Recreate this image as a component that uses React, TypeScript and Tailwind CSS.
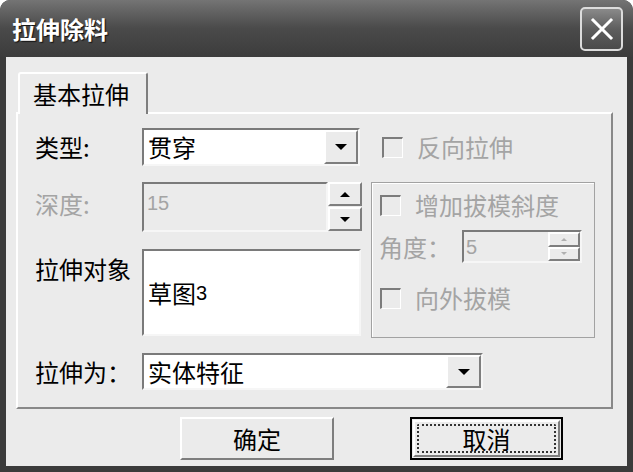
import React from "react";

const F = "font-['Noto_Sans_CJK_SC','Noto_Sans_CJK_JP',sans-serif]";

function Down({ color = "border-t-black", size = "big" }: { color?: string; size?: string }) {
  if (size === "big")
    return <div className={`w-0 h-0 border-l-[6px] border-r-[6px] border-t-[6px] border-l-transparent border-r-transparent ${color}`} />;
  if (size === "mid")
    return <div className={`w-0 h-0 border-l-[5px] border-r-[5px] border-t-[5px] border-l-transparent border-r-transparent ${color}`} />;
  return <div className={`w-0 h-0 border-l-[3px] border-r-[3px] border-t-[3px] border-l-transparent border-r-transparent ${color}`} />;
}
function Up({ color = "border-b-black", size = "big" }: { color?: string; size?: string }) {
  if (size === "big")
    return <div className={`w-0 h-0 border-l-[6px] border-r-[6px] border-b-[6px] border-l-transparent border-r-transparent ${color}`} />;
  if (size === "mid")
    return <div className={`w-0 h-0 border-l-[5px] border-r-[5px] border-b-[5px] border-l-transparent border-r-transparent ${color}`} />;
  return <div className={`w-0 h-0 border-l-[3px] border-r-[3px] border-b-[3px] border-l-transparent border-r-transparent ${color}`} />;
}

const sunken =
  "border-2 border-t-[#7a7a7a] border-l-[#7a7a7a] border-b-[#f6f6f6] border-r-[#f6f6f6]";
const raised =
  "border-2 border-t-white border-l-white border-b-[#7e7e7e] border-r-[#7e7e7e] bg-[#ebebeb]";

function CheckBox({ label }: { label: string }) {
  return (
    <div className="flex items-center">
      <div className="w-[21px] h-[21px] border-t-2 border-l-2 border-[#7c7c7c] border-b border-r border-b-white border-r-white bg-[#ebebeb]" />
      <span className="ml-[14px] text-[24px] leading-none text-[#a4a4a4]">{label}</span>
    </div>
  );
}

export default function App() {
  return (
    <div className={`w-[633px] h-[472px] bg-[#3b3b3b] rounded-t-[10px] flex flex-col overflow-hidden ${F}`}>
      {/* title bar */}
      <div className="h-[57px] flex items-center justify-between pl-[12px] pr-[10px] bg-gradient-to-b from-[#747474] via-[#4a4a4a] to-[#3c3c3c]">
        <span className="text-[24px] font-bold text-white leading-none [text-shadow:1px_1px_1px_#111]">拉伸除料</span>
        <div className="w-[43px] h-[44px] rounded-[5px] border-2 border-[#dcdcdc] bg-gradient-to-b from-[#8a8a8a] via-[#5e5e5e] to-[#4a4a4a] flex items-center justify-center">
          <svg width="26" height="26" viewBox="0 0 26 26">
            <path d="M4 4 L22 22 M22 4 L4 22" stroke="white" strokeWidth="3" strokeLinecap="square" />
          </svg>
        </div>
      </div>

      {/* client */}
      <div className="flex-1 mx-[6px] mb-[6px] bg-[#ebebeb] flex flex-col">
        {/* tab */}
        <div className="ml-[12px] mt-[15px] w-[130px] h-[42px] -mb-[2px] relative z-10 bg-[#ebebeb] border-t-2 border-l-2 border-white border-r-2 border-r-[#7e7e7e] rounded-t-[3px] flex items-center pl-[13px]">
          <span className="text-[24px] leading-none text-black">基本拉伸</span>
        </div>

        {/* panel */}
        <div className="ml-[10px] w-[597px] h-[297px] border-2 border-t-white border-l-white border-b-[#888] border-r-[#888] flex flex-col pl-[17px]">
          {/* row 1 */}
          <div className="mt-[14px] h-[38px] flex items-center">
            <span className="w-[107px] text-[24px] leading-none text-black">类型:</span>
            <div className={`w-[218px] h-[38px] bg-white ${sunken} flex items-center`}>
              <span className="flex-1 pl-[4px] text-[24px] leading-none text-black">贯穿</span>
              <div className={`w-[34px] h-[34px] ${raised} flex items-center justify-center`}>
                <Down />
              </div>
            </div>
            <div className="ml-[22px]">
              <CheckBox label="反向拉伸" />
            </div>
          </div>

          {/* block 2 */}
          <div className="mt-[16px] flex">
            <div className="flex flex-col">
              <div className="flex h-[50px]">
                <span className="w-[107px] mt-[10px] text-[24px] leading-none text-[#a4a4a4]">深度:</span>
                <div className={`w-[186px] h-[50px] ${sunken} bg-[#ebebeb] pl-[3px] pt-[7px]`}>
                  <span className="text-[20px] leading-none text-[#a4a4a4] font-['Liberation_Sans',sans-serif]">15</span>
                </div>
                <div className="w-[34px] flex flex-col gap-[1px]">
                  <div className={`h-[24px] ${raised} flex items-center justify-center`}>
                    <Up size="mid" />
                  </div>
                  <div className={`h-[24px] ${raised} flex items-center justify-center`}>
                    <Down size="mid" />
                  </div>
                </div>
              </div>
              <div className="flex h-[87px] mt-[17px]">
                <span className="w-[107px] mt-[8px] text-[24px] leading-none text-black">拉伸对象</span>
                <div className={`w-[219px] h-[87px] bg-white ${sunken} flex items-center pl-[4px]`}>
                  <span className="text-[24px] leading-none text-black">草图</span>
                  <span className="text-[20px] leading-none text-black font-['Liberation_Sans',sans-serif]">3</span>
                </div>
              </div>
            </div>

            {/* group box */}
            <div className="ml-[9px] w-[224px] h-[156px] border border-[#a2a2a2] shadow-[inset_1px_1px_0_#fff] flex flex-col pl-[8px]">
              <div className="mt-[10px]">
                <CheckBox label="增加拔模斜度" />
              </div>
              <div className="mt-[13px] flex items-center">
                <span className="w-[83px] -ml-[1px] text-[24px] leading-none text-[#a4a4a4]">角度：</span>
                <div className={`w-[120px] h-[33px] ${sunken} bg-[#ebebeb] flex items-center`}>
                  <span className="flex-1 pl-[2px] text-[20px] leading-none text-[#a4a4a4] font-['Liberation_Sans',sans-serif]">5</span>
                  <div className="w-[32px] h-full flex flex-col">
                    <div className={`flex-1 ${raised} flex items-center justify-center`}>
                      <Up size="small" color="border-b-[#b0b0b0]" />
                    </div>
                    <div className={`flex-1 ${raised} flex items-center justify-center`}>
                      <Down size="small" color="border-t-[#b0b0b0]" />
                    </div>
                  </div>
                </div>
              </div>
              <div className="mt-[23px]">
                <CheckBox label="向外拔模" />
              </div>
            </div>
          </div>

          {/* row 4 */}
          <div className="mt-[15px] h-[37px] flex items-center">
            <span className="w-[107px] text-[24px] leading-none text-black">拉伸为：</span>
            <div className={`w-[341px] h-[37px] bg-white ${sunken} flex items-center`}>
              <span className="flex-1 pl-[4px] text-[24px] leading-none text-black">实体特征</span>
              <div className={`w-[35px] h-[33px] ${raised} flex items-center justify-center`}>
                <Down />
              </div>
            </div>
          </div>
        </div>

        {/* buttons */}
        <div className="mt-[8px] flex">
          <div className={`ml-[174px] w-[154px] h-[43px] ${raised} flex items-center justify-center`}>
            <span className="text-[24px] leading-none text-black">确定</span>
          </div>
          <div className="ml-[76px] w-[153px] h-[43px] border-2 border-black bg-[#ebebeb] p-[1px]">
            <div className="w-full h-full border-2 border-t-white border-l-white border-b-[#7e7e7e] border-r-[#7e7e7e] p-[2px]">
              <div className="w-full h-full border-2 border-dotted border-[#333] flex items-center justify-center rounded-[2px]">
                <span className="text-[24px] leading-none text-black">取消</span>
              </div>
            </div>
          </div>
        </div>
      </div>
    </div>
  );
}
